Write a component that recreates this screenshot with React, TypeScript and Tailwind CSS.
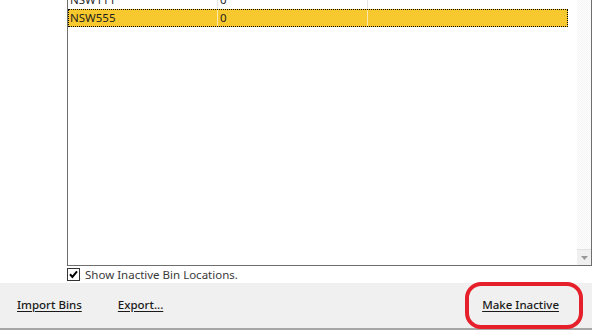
import React from 'react'

const rows = [
    { code: 'NSW111', qty: '0', selected: false },
    { code: 'NSW555', qty: '0', selected: true },
]

export default function App() {
    return (
        <div
            className="relative w-[592px] h-[330px] overflow-hidden bg-white flex flex-col text-[11.5px] text-[#1e1e1e]"
            style={{ fontFamily: '"Noto Sans", "Open Sans", sans-serif' }}
        >
            {/* Bin list */}
            <div className="ml-[67px] w-[525px] h-[266px] flex border-l border-r border-b border-[#6e6e6e] overflow-hidden">
                <div className="flex-1 mt-[-9px]">
                    {rows.map((r) => (
                        <div
                            key={r.code}
                            className={
                                r.selected
                                    ? 'flex w-[500px] h-[18px] items-center bg-[#f8c92e] outline outline-1 outline-dotted outline-black -outline-offset-1'
                                    : 'flex w-[500px] h-[18px] items-center'
                            }
                        >
                            <div className={r.selected ? 'w-[150px] h-full pl-[2px] flex items-center border-r border-[#fbe7a8]' : 'w-[150px] h-full pl-[2px] flex items-center border-r border-[#e6e6e6]'}>
                                {r.code}
                            </div>
                            <div className={r.selected ? 'w-[150px] h-full pl-[2px] flex items-center border-r border-[#fbe7a8]' : 'w-[150px] h-full pl-[2px] flex items-center border-r border-[#e6e6e6]'}>
                                {r.qty}
                            </div>
                            <div className="flex-1 h-full" />
                        </div>
                    ))}
                </div>
                {/* Scrollbar */}
                <div className="w-[14px] h-full flex flex-col justify-end bg-[repeating-conic-gradient(#f4f4f4_0%_25%,#ffffff_0%_50%)] bg-[length:2px_2px]">
                    <div className="h-[16px] bg-[#f0f0f0] border-t border-[#e2e2e2] flex items-center justify-center">
                        <svg width="7" height="4" viewBox="0 0 7 4">
                            <path d="M0 0h7L3.5 4z" fill="#9a9a9a" />
                        </svg>
                    </div>
                </div>
            </div>

            {/* Checkbox row */}
            <div className="ml-[67px] h-[17px] flex items-center gap-[5px] text-[#3a3a3a]">
                <div className="w-[13px] h-[13px] border border-[#333] bg-white flex items-center justify-center">
                    <svg width="9" height="9" viewBox="0 0 9 9">
                        <path d="M1 4.3l2.4 2.6L8 1.4" stroke="#000" strokeWidth="2" fill="none" />
                    </svg>
                </div>
                <span>Show Inactive Bin Locations.</span>
            </div>

            {/* Action bar */}
            <div className="flex-1 bg-[#f0f0f0] border-b-2 border-[#a6a6a6] flex items-center pb-[2px] font-medium text-[#1a1a1a]">
                <span className="ml-[17px] underline underline-offset-2">Import Bins</span>
                <span className="ml-[36px] underline underline-offset-2">Export...</span>
                <span className="ml-auto mr-[33px] underline underline-offset-2">Make Inactive</span>
            </div>

            {/* Red highlight annotation */}
            <div className="absolute left-[465px] top-[282px] w-[118px] h-[47px] border-[4px] border-[#e5202b] rounded-[16px] pointer-events-none" />
        </div>
    )
}
